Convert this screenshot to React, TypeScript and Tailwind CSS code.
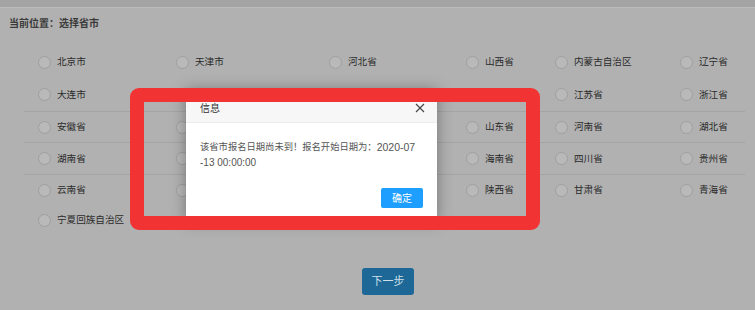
import React from "react";

const rows: string[][] = [
  ["北京市", "天津市", "河北省", "山西省", "内蒙古自治区", "辽宁省"],
  ["大连市", "吉林省", "黑龙江省", "上海市", "江苏省", "浙江省"],
  ["安徽省", "福建省", "江西省", "山东省", "河南省", "湖北省"],
  ["湖南省", "广东省", "广西壮族自治区", "海南省", "四川省", "贵州省"],
  ["云南省", "西藏自治区", "重庆市", "陕西省", "甘肃省", "青海省"],
  ["宁夏回族自治区"],
];

const rowClasses = [
  "h-[32px]",
  "h-[33px]",
  "h-[31px] border-t border-[#a4a4a4]",
  "h-[32px] border-t border-[#a4a4a4]",
  "h-[31px] border-t border-[#a4a4a4]",
  "h-[30px]",
];

function Radio({ label }: { label: string }) {
  return (
    <div className="flex items-center gap-[6px] pl-[14px]">
      <span className="w-[13px] h-[13px] rounded-full border border-[#9f9f9f] bg-[#b9b9b9] shrink-0" />
      <span className="text-[9.6px] leading-[12px] text-[#2a2a2a] whitespace-nowrap">{label}</span>
    </div>
  );
}

export default function App() {
  return (
    <div
      className="relative w-[755px] h-[310px] overflow-hidden bg-[#b1b1b1]"
      style={{ fontFamily: '"Liberation Sans", "Noto Sans CJK SC", sans-serif' }}
    >
      <div className="h-[8px] bg-[#a4a4a4] border-b border-[#bcbcbc]" />
      <div className="pl-[9px] pt-[9px] h-[22px] text-[10px] leading-[13px] font-bold text-[#3a3a3a]">
        当前位置：选择省市
      </div>

      <div className="ml-[24px] w-[721px] mt-[16px]">
        {rows.map((r, i) => (
          <div
            key={i}
            className={`grid grid-cols-[138px_153px_137px_89px_125px_1fr] items-center ${rowClasses[i]}`}
          >
            {r.map((p) => (
              <Radio key={p} label={p} />
            ))}
          </div>
        ))}
      </div>

      <div className="ml-[362px] mt-[33px] w-[52px] h-[27px] rounded-[3px] bg-[#1d6897] flex items-center justify-center text-[11px] text-[#cfe0ea]">
        下一步
      </div>

      {/* dialog */}
      <div className="absolute left-[186px] top-[90px] w-[251px] h-[132px] bg-white shadow-[0_0_14px_rgba(0,0,0,0.35)]">
        <div className="relative h-[33px] bg-[#f7f7f7] border-b border-[#ececec] pl-[14px] pt-[12px] text-[10px] leading-[14px] text-[#333]">
          信息
          <svg
            className="absolute left-[229px] top-[13px]"
            width="10"
            height="10"
            viewBox="0 0 10 10"
          >
            <path d="M1 1 L9 9 M9 1 L1 9" stroke="#444" strokeWidth="1.1" />
          </svg>
        </div>
        <div className="pl-[14px] pt-[16px] text-[#555] whitespace-nowrap">
          <div className="h-[16px] leading-[16px] flex items-center">
            <span className="text-[9.3px] leading-[12px]">该省市报名日期尚未到！报名开始日期为：</span>
            <span className="text-[10.5px] leading-[12px]">2020-07</span>
          </div>
          <div className="h-[16px] leading-[16px] text-[10px]">-13 00:00:00</div>
        </div>
        <div className="flex justify-end pr-[14px] mt-[17px]">
          <div className="w-[42px] h-[20px] rounded-[2px] bg-[#1e9fff] text-white text-[10px] flex items-center justify-center">
            确定
          </div>
        </div>
      </div>

      {/* red annotation box */}
      <div className="absolute left-[130px] top-[88px] w-[410px] h-[142px] border-[14px] border-[#f23333] rounded-[9px]" />
    </div>
  );
}
